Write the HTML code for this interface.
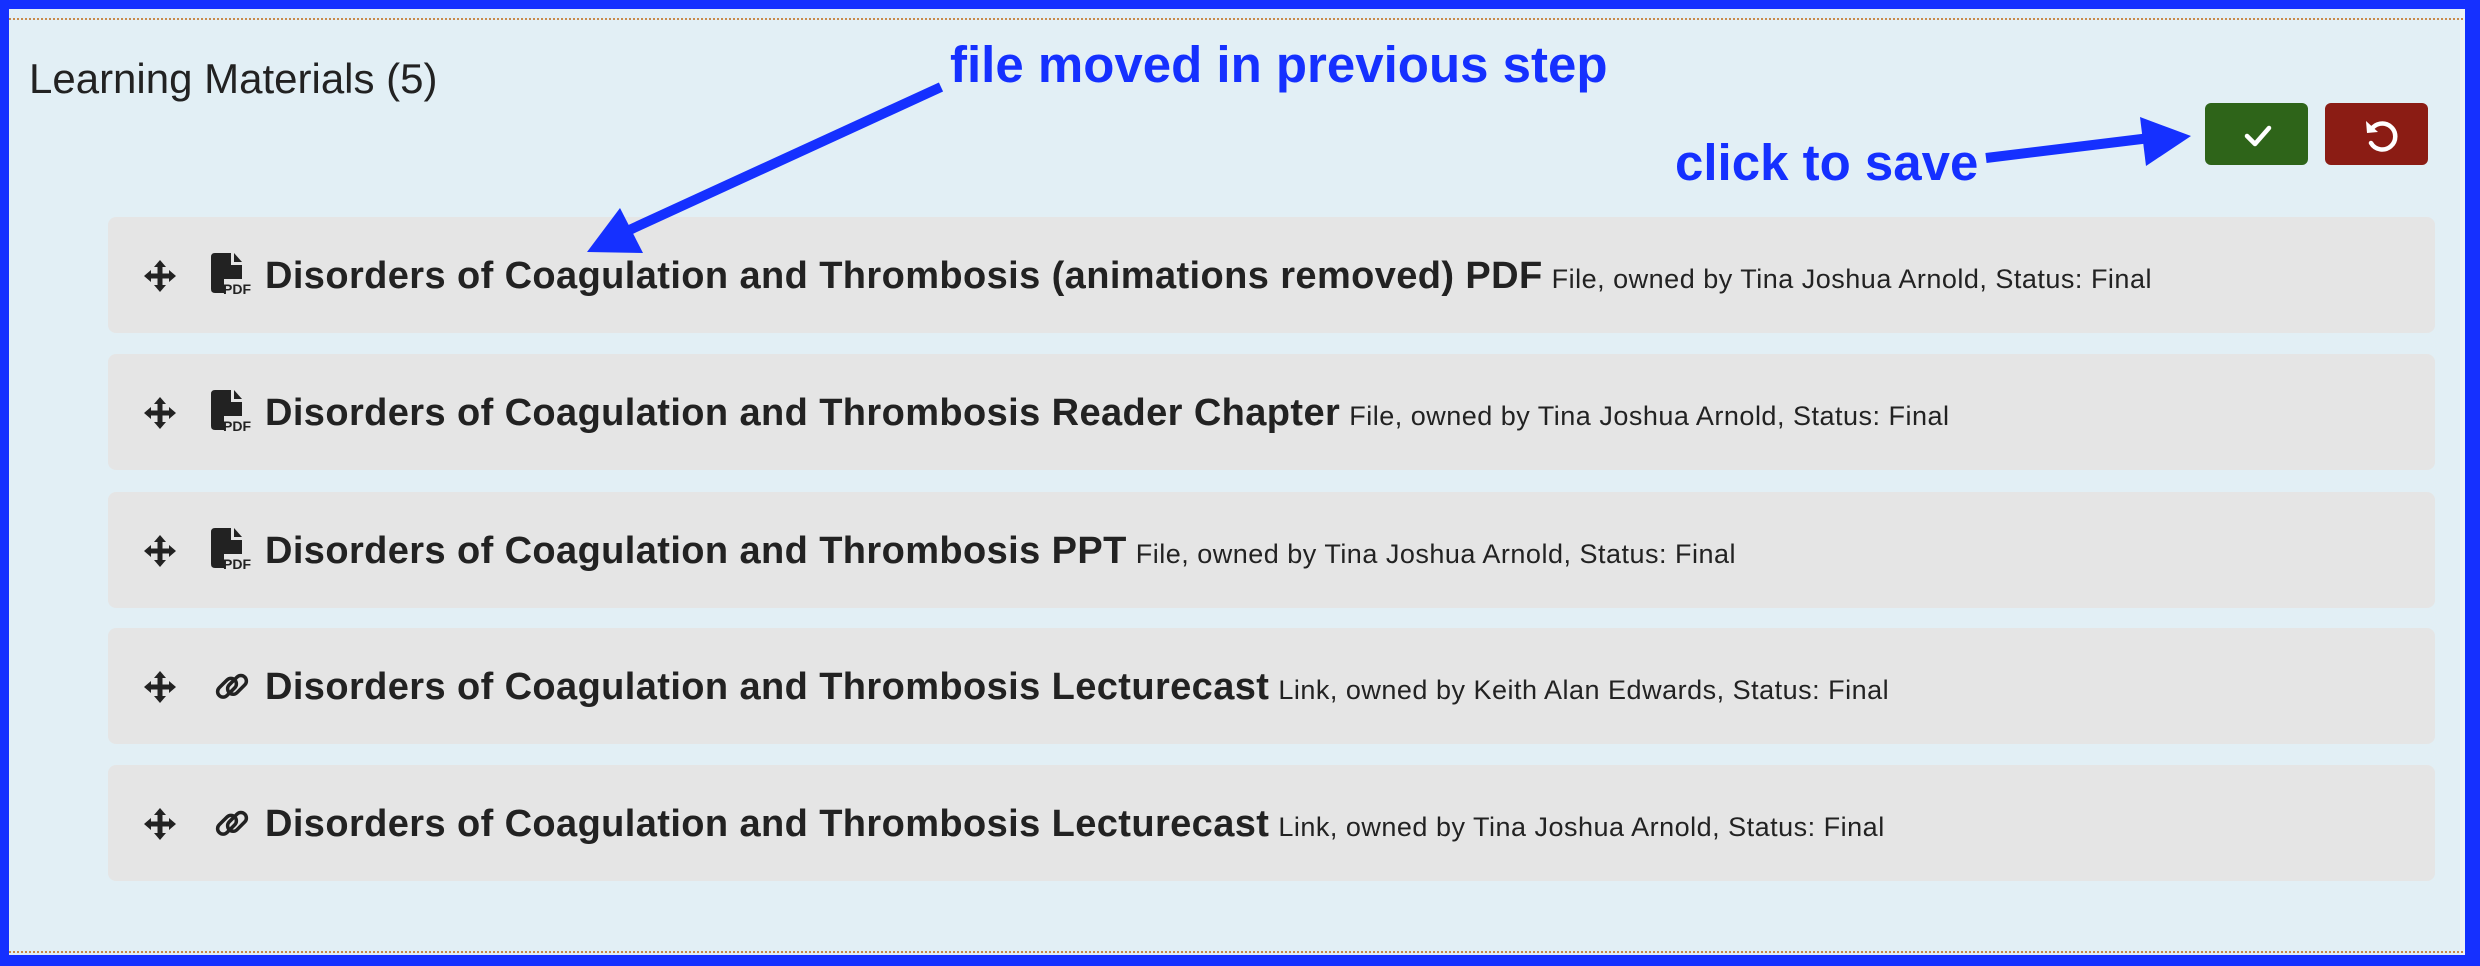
<!DOCTYPE html>
<html><head><meta charset="utf-8"><style>
html,body{margin:0;padding:0}
body{width:2480px;height:966px;position:relative;overflow:hidden;background:#1530ff;font-family:"Liberation Sans",sans-serif}
#panel{position:absolute;left:9px;top:9px;width:2451px;height:946px;background:#e2eff5}
#rstrip{position:absolute;left:2460px;top:9px;width:5px;height:946px;background:#eef2f6}
.dot{position:absolute;left:9px;width:2454px;height:0;border-top:2px dotted #c88a4a}
h1{position:absolute;left:29px;top:57px;margin:0;font-size:42px;font-weight:normal;color:#222;line-height:44px}
.row{position:absolute;left:108px;width:2327px;height:116px;background:#e5e5e5;border-radius:8px}
.row .mv{position:absolute;left:35px;top:42px}
.row .ic{position:absolute;left:103px;top:36px}
.row .t{position:absolute;left:157px;top:1px;line-height:116px;white-space:nowrap;color:#222}
.t b{font-size:38px;letter-spacing:0.4px;font-weight:bold}
.t span{font-size:27px;letter-spacing:0.5px;margin-left:9px}
.btn{position:absolute;top:103px;width:103px;height:62px;border-radius:6px}
.ann{position:absolute;color:#1530ff;font-weight:bold;font-size:51px;white-space:nowrap;line-height:60px}
#arr{position:absolute;left:0;top:0;z-index:5}
</style></head><body>
<div id="panel"></div>
<div id="rstrip"></div>
<div class="dot" style="top:18px"></div>
<div class="dot" style="top:951px"></div>
<h1>Learning Materials (5)</h1>

<div class="btn" style="left:2205px;background:#2e6419"><svg width="103" height="62"><path d="M42 33 L50 41 L64 25" stroke="#fff" stroke-width="4.5" fill="none" stroke-linecap="round" stroke-linejoin="round"/></svg></div>
<div class="btn" style="left:2325px;background:#8b1c14"><svg width="103" height="62"><path d="M46 27 A13 13 0 1 1 46 40" stroke="#fff" stroke-width="4.5" fill="none" stroke-linecap="round"/><path d="M41 18 L42 30 L53 29 Z" fill="#fff"/></svg></div>

<div class="ann" style="left:950px;top:35px">file moved in previous step</div>
<div class="ann" style="left:1675px;top:133px">click to save</div>

<div class="row" style="top:217px">
<svg class="mv" width="34" height="34" viewBox="0 0 34 34"><path d="M17 1 L23 8 H19.5 V14.5 H26 V11 L33 17 L26 23 V19.5 H19.5 V26 H23 L17 33 L11 26 H14.5 V19.5 H8 V23 L1 17 L8 11 V14.5 H14.5 V8 H11 Z" fill="#222"/></svg>
<svg class="ic" width="42" height="42" viewBox="0 0 42 42"><path d="M4 0 H20 V12 H31 V26 H13 V40 H4 Q0 40 0 36 V4 Q0 0 4 0 Z" fill="#222"/><path d="M23 0 L31 9 H23 Z" fill="#222"/><text x="12" y="41" font-family="Liberation Sans" font-weight="bold" font-size="14" fill="#222">PDF</text></svg>
<div class="t"><b>Disorders of Coagulation and Thrombosis (animations removed) PDF</b><span>File, owned by Tina Joshua Arnold, Status: Final</span></div>
</div>

<div class="row" style="top:354px">
<svg class="mv" width="34" height="34" viewBox="0 0 34 34"><path d="M17 1 L23 8 H19.5 V14.5 H26 V11 L33 17 L26 23 V19.5 H19.5 V26 H23 L17 33 L11 26 H14.5 V19.5 H8 V23 L1 17 L8 11 V14.5 H14.5 V8 H11 Z" fill="#222"/></svg>
<svg class="ic" width="42" height="42" viewBox="0 0 42 42"><path d="M4 0 H20 V12 H31 V26 H13 V40 H4 Q0 40 0 36 V4 Q0 0 4 0 Z" fill="#222"/><path d="M23 0 L31 9 H23 Z" fill="#222"/><text x="12" y="41" font-family="Liberation Sans" font-weight="bold" font-size="14" fill="#222">PDF</text></svg>
<div class="t"><b>Disorders of Coagulation and Thrombosis Reader Chapter</b><span>File, owned by Tina Joshua Arnold, Status: Final</span></div>
</div>

<div class="row" style="top:492px">
<svg class="mv" width="34" height="34" viewBox="0 0 34 34"><path d="M17 1 L23 8 H19.5 V14.5 H26 V11 L33 17 L26 23 V19.5 H19.5 V26 H23 L17 33 L11 26 H14.5 V19.5 H8 V23 L1 17 L8 11 V14.5 H14.5 V8 H11 Z" fill="#222"/></svg>
<svg class="ic" width="42" height="42" viewBox="0 0 42 42"><path d="M4 0 H20 V12 H31 V26 H13 V40 H4 Q0 40 0 36 V4 Q0 0 4 0 Z" fill="#222"/><path d="M23 0 L31 9 H23 Z" fill="#222"/><text x="12" y="41" font-family="Liberation Sans" font-weight="bold" font-size="14" fill="#222">PDF</text></svg>
<div class="t"><b>Disorders of Coagulation and Thrombosis PPT</b><span>File, owned by Tina Joshua Arnold, Status: Final</span></div>
</div>

<div class="row" style="top:628px">
<svg class="mv" width="34" height="34" viewBox="0 0 34 34"><path d="M17 1 L23 8 H19.5 V14.5 H26 V11 L33 17 L26 23 V19.5 H19.5 V26 H23 L17 33 L11 26 H14.5 V19.5 H8 V23 L1 17 L8 11 V14.5 H14.5 V8 H11 Z" fill="#222"/></svg>
<svg class="ic" width="42" height="42" viewBox="0 0 42 42"><g fill="none" stroke="#222" stroke-width="3.5"><rect x="5" y="14" width="22" height="11" rx="5.5" transform="rotate(-45 16 19.5) translate(-3,3)"/><rect x="15" y="14" width="22" height="11" rx="5.5" transform="rotate(-45 26 19.5) translate(-1,1)"/></g></svg>
<div class="t"><b>Disorders of Coagulation and Thrombosis Lecturecast</b><span>Link, owned by Keith Alan Edwards, Status: Final</span></div>
</div>

<div class="row" style="top:765px">
<svg class="mv" width="34" height="34" viewBox="0 0 34 34"><path d="M17 1 L23 8 H19.5 V14.5 H26 V11 L33 17 L26 23 V19.5 H19.5 V26 H23 L17 33 L11 26 H14.5 V19.5 H8 V23 L1 17 L8 11 V14.5 H14.5 V8 H11 Z" fill="#222"/></svg>
<svg class="ic" width="42" height="42" viewBox="0 0 42 42"><g fill="none" stroke="#222" stroke-width="3.5"><rect x="5" y="14" width="22" height="11" rx="5.5" transform="rotate(-45 16 19.5) translate(-3,3)"/><rect x="15" y="14" width="22" height="11" rx="5.5" transform="rotate(-45 26 19.5) translate(-1,1)"/></g></svg>
<div class="t"><b>Disorders of Coagulation and Thrombosis Lecturecast</b><span>Link, owned by Tina Joshua Arnold, Status: Final</span></div>
</div>

<svg id="arr" width="2480" height="966">
<line x1="941" y1="87" x2="625" y2="232" stroke="#1530ff" stroke-width="10"/>
<polygon points="587,252 620,208 643,253" fill="#1530ff"/>
<line x1="1986" y1="158" x2="2150" y2="138" stroke="#1530ff" stroke-width="10"/>
<polygon points="2191,136 2140,117 2146,166" fill="#1530ff"/>
</svg>
</body></html>
